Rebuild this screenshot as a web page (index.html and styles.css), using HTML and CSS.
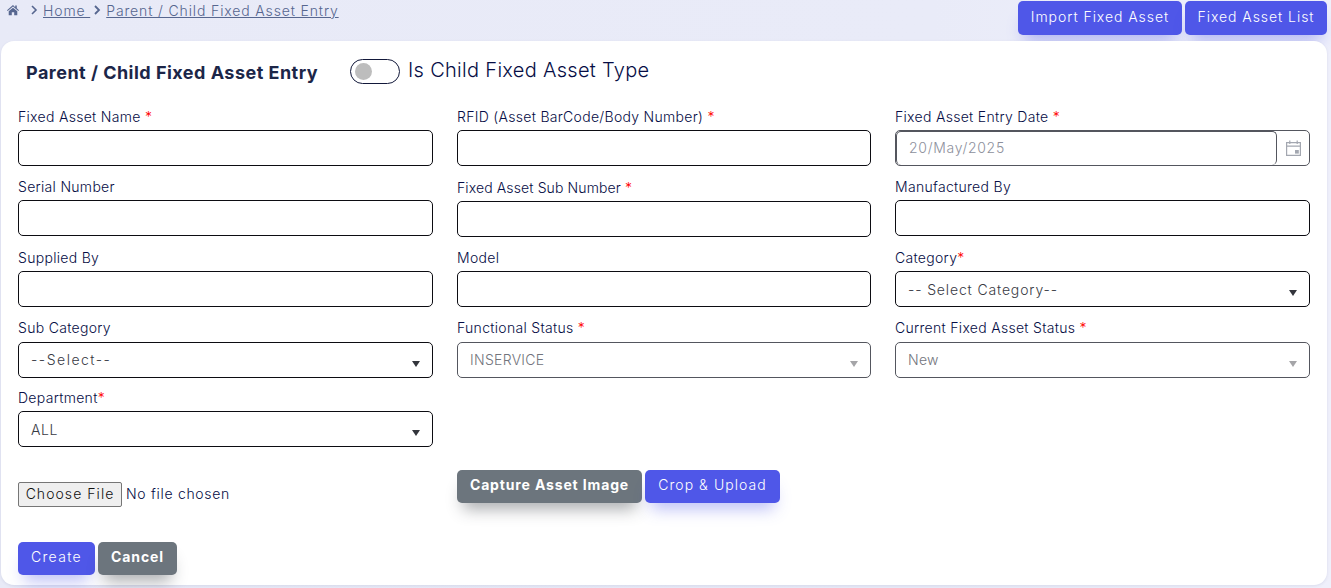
FILE: index.html
```html
<!DOCTYPE html>
<html lang="en">
<head>
<meta charset="utf-8">
<title>Parent / Child Fixed Asset Entry</title>
<link rel="stylesheet" href="styles.css">
</head>
<body>
<header class="topbar">
  <nav class="crumbs">
    <svg class="home" viewBox="0 0 16 14" width="14" height="12"><path d="M8 1.2 1 7.2l.8.9L8 2.8l6.2 5.3.8-.9-2.6-2.2V1.8h-1.8v1.9zM3 8.6V13h3.6V9.6h2.8V13H13V8.6L8 4.3z" fill="#56668f"/></svg>
    <svg class="chev first" viewBox="0 0 8 10" width="8" height="10"><path d="M2 1l4 4-4 4" fill="none" stroke="#56668f" stroke-width="1.6"/></svg>
    <a class="crumb" href="#">Home&nbsp;</a>
    <svg class="chev" viewBox="0 0 8 10" width="8" height="10"><path d="M2 1l4 4-4 4" fill="none" stroke="#56668f" stroke-width="1.8"/></svg>
    <a class="crumb" href="#">Parent / Child Fixed Asset Entry</a>
  </nav>
  <div class="top-actions">
    <button class="btn primary wide">Import Fixed Asset</button>
    <button class="btn primary wide">Fixed Asset List</button>
  </div>
</header>
<main class="card">
  <div class="title-row">
    <h1>Parent / Child Fixed Asset Entry</h1>
    <span class="toggle"><span class="knob"></span></span>
    <span class="toggle-label">Is Child Fixed Asset Type</span>
  </div>
  <form class="form-grid">
    <div class="field"><label>Fixed Asset Name <em>*</em></label><input class="ctl" type="text"></div>
    <div class="field"><label>RFID (Asset BarCode/Body Number) <em>*</em></label><input class="ctl" type="text"></div>
    <div class="field"><label>Fixed Asset Entry Date <em>*</em></label>
      <div class="date-group"><div class="date-value">20/May/2025</div>
        <div class="date-addon"><svg viewBox="0 0 15 16" width="15" height="16"><path d="M.6 2.6h13.8v12.8H.6zM.6 6.2h13.8M3.8.5v3.4M11.2.5v3.4" fill="none" stroke="#a3a7b0" stroke-width="1.2"/><rect x="9" y="10" width="3.8" height="3.6" fill="#a3a7b0"/></svg></div></div></div>

    <div class="field"><label>Serial Number</label><input class="ctl" type="text"></div>
    <div class="field nudge"><label class="tight">Fixed Asset Sub Number <em>*</em></label><input class="ctl" type="text"></div>
    <div class="field"><label>Manufactured By</label><input class="ctl" type="text"></div>

    <div class="field"><label>Supplied By</label><input class="ctl" type="text"></div>
    <div class="field"><label>Model</label><input class="ctl" type="text"></div>
    <div class="field"><label>Category<em>*</em></label><div class="ctl select low"><span class="dashed">-- Select Category--</span><i class="caret"></i></div></div>

    <div class="field lift"><label>Sub Category</label><div class="ctl select"><span class="dashed wide-dash">--Select--</span><i class="caret"></i></div></div>
    <div class="field lift"><label>Functional Status <em>*</em></label><div class="ctl select off"><span>INSERVICE</span><i class="caret"></i></div></div>
    <div class="field lift"><label>Current Fixed Asset Status <em>*</em></label><div class="ctl select off"><span>New</span><i class="caret"></i></div></div>

    <div class="field lift"><label>Department<em>*</em></label><div class="ctl select low"><span>ALL</span><i class="caret"></i></div></div>
  </form>
  <div class="upload-row">
    <div class="file-cell"><button type="button" class="file-btn">Choose File</button><span class="file-name">No file chosen</span></div>
    <div class="capture-cell">
      <button class="btn grey capture">Capture Asset Image</button>
      <button class="btn primary crop">Crop &amp; Upload</button>
    </div>
  </div>
  <div class="footer-row">
    <button class="btn primary create">Create</button>
    <button class="btn grey cancel">Cancel</button>
  </div>
</main>
</body>
</html>
```
FILE: styles.css
```css
* { box-sizing: border-box; }
html, body { margin: 0; height: 100%; overflow: hidden; }
body {
  width: 1331px; height: 588px;
  background: linear-gradient(90deg, #e8eaf7 0%, #e9ebf8 70%, #eff0fb 100%);
  font-family: Inter, "Liberation Sans", sans-serif;
  font-size: 14px;
  color: #060d45;
}
.topbar {
  height: 41px; display: flex; justify-content: space-between; align-items: flex-start;
  padding: 1px 4px 0 6px;
}
.crumbs { display: flex; align-items: center; height: 18px; color: #56668f; }
.home { margin-right: 10px; }
.chev { margin-right: 5px; }
.chev.first { margin-right: 5px; }
.crumb { color: #56668f; font-size: 14px; letter-spacing: .86px; text-decoration: underline; margin-right: 3px; font-weight: 300; }
.top-actions { display: flex; gap: 3px; }
.btn {
  height: 34px; border: 0; border-radius: 5px; color: #fff; font-family: inherit; font-size: 14px;
  letter-spacing: .95px; padding: 0 0 3px; font-weight: 300; white-space: nowrap;
}
.primary { background: #4f57e8; box-shadow: 0 12px 16px -6px rgba(79, 87, 232, .38); }
.grey { background: #6c757d; font-weight: 700; letter-spacing: .85px; box-shadow: 0 12px 16px -6px rgba(50, 56, 62, .42); }
.top-actions .btn:first-child { width: 164px; }
.top-actions .btn:last-child { width: 142px; }
.card {
  position: relative; margin: 0 4px 0 1px; height: 544px; background: #fff; border-radius: 13px;
  padding: 0 21px 0 17px; box-shadow: 0 1px 3px rgba(40, 50, 110, .1);
}
.title-row { height: 66px; padding: 0 0 0 8px; display: flex; align-items: flex-start; }
h1 { margin: 20px 32px 0 0; font-size: 18px; line-height: 24px; font-weight: 700; color: #1c2648; letter-spacing: .48px; white-space: nowrap; }
.toggle { width: 50px; height: 25px; margin-top: 18px; border: 1px solid #12183a; border-radius: 13px; display: block; padding: 3px 0 0 4px; flex: none; }
.knob { display: block; width: 17px; height: 17px; border-radius: 50%; background: #bdbdbd; }
.toggle-label { margin: 17px 0 0 8px; font-size: 20px; line-height: 24px; letter-spacing: .3px; font-weight: 300; white-space: nowrap; }
.form-grid {
  display: grid; grid-template-columns: 415px 414px 415px; column-gap: 24px;
  grid-template-rows: 70px 71px 71px 70px 58px; margin: 0;
}
.field { display: flex; flex-direction: column; }
.field label { height: 23px; line-height: 20px; letter-spacing: .3px; font-weight: 300; white-space: nowrap; }
.field label.tight { letter-spacing: .12px; }
.nudge { padding-top: 1px; }
.lift label { margin-top: -1px; height: 24px; }
.field em { color: #f00; font-style: normal; }
.ctl {
  display: block; width: 100%; height: 36px; border: 1px solid #0c0c12; border-radius: 5px; background: #fff;
  padding: 0 12px; font-family: inherit; font-size: 14px; flex: none;
}
.select { position: relative; display: flex; align-items: center; color: #383a44; letter-spacing: .6px; font-weight: 300; padding-bottom: 2px; }
.select.low { padding-bottom: 0; }
.dashed { letter-spacing: .85px; }
.wide-dash { letter-spacing: 1.5px; }
.caret { position: absolute; right: 12px; top: 18px; border: 4px solid transparent; border-top: 6px solid #33353c; border-bottom: 0; }
.off { border-color: #54565e; color: #72747c; letter-spacing: .3px; }
.off .caret { border-top-color: #a5a5a8; }
.date-group { display: flex; height: 36px; border: 1px solid #54565e; border-radius: 5px; }
.date-value { flex: 1; border-top: 1px solid #54565e; border-left: 1px solid #54565e; border-right: 1px solid #54565e; border-radius: 5px; padding: 0 12px 2px; display: flex; align-items: center; color: #8d909c; letter-spacing: .7px; font-weight: 300; }
.date-addon { width: 32px; display: flex; align-items: center; justify-content: center; }
.upload-row { display: grid; grid-template-columns: 415px 1fr; column-gap: 24px; margin-top: 22px; height: 73px; }
.file-cell { display: flex; align-items: flex-start; padding-top: 13px; }
.file-btn { width: 104px; height: 25px; padding: 0 0 2px; background: #efefef; border: 1px solid #767676; border-radius: 2px; font-family: inherit; font-size: 14px; letter-spacing: 1.05px; color: #111; font-weight: 300; }
.file-name { margin-left: 4px; line-height: 23px; letter-spacing: .7px; font-weight: 300; }
.capture-cell { display: flex; gap: 3px; padding-top: 1px; }
.capture { width: 185px; height: 33px; padding-bottom: 5px; }
.crop { width: 135px; height: 33px; letter-spacing: 1.05px; padding-bottom: 5px; }
.footer-row { display: flex; gap: 3px; }
.create { width: 77px; height: 33px; letter-spacing: 1.3px; padding-bottom: 5px; }
.cancel { width: 79px; height: 33px; letter-spacing: .9px; padding-bottom: 5px; }
```
